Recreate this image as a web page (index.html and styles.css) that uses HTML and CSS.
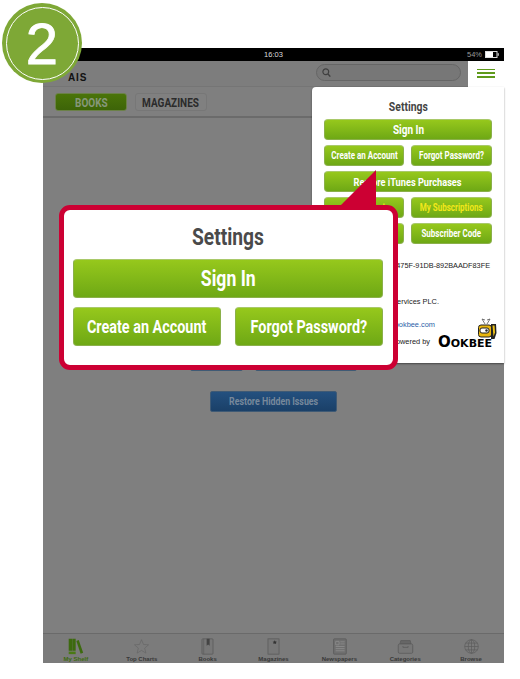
FILE: index.html
```html
<!DOCTYPE html>
<html lang="en">
<head>
<meta charset="utf-8">
<title>Settings</title>
<link rel="stylesheet" href="styles.css">
</head>
<body>
<div class="device">
  <div class="status">
    <span class="status-time">16:03</span>
    <span class="status-right">54%
      <svg class="battery" width="14" height="7" viewBox="0 0 14 7"><rect x=".5" y=".5" width="11.5" height="6" fill="none" stroke="#ddd"/><rect x="1" y="1" width="7" height="5" fill="#fff"/><rect x="12.6" y="2.2" width="1.2" height="2.6" fill="#ccc"/></svg>
    </span>
  </div>
  <header class="top">
    <span class="brand">AIS</span>
    <div class="search">
      <svg width="9" height="10" viewBox="0 0 9 10"><circle cx="3.8" cy="3.8" r="2.9" fill="none" stroke="#3f3f3f" stroke-width="1.2"/><path d="M6 6l2.3 2.6" stroke="#3f3f3f" stroke-width="1.4"/></svg>
    </div>
    <div class="menu"><i></i><i></i><i></i></div>
  </header>
  <div class="tabs">
    <span class="tab tab-on"><b class="c">BOOKS</b></span>
    <span class="tab"><b class="c">MAGAZINES</b></span>
  </div>
  <main class="shelf">
    <div class="shelf-row">
      <span class="blue blue-a"><b class="c">Hide</b></span>
      <span class="blue blue-b"><b class="c">Update Library</b></span>
    </div>
    <span class="blue blue-c"><b class="c">Restore Hidden Issues</b></span>
  </main>
  <nav class="bar">
    <div class="bar-item bar-on">
      <svg width="20" height="20" viewBox="0 0 20 20"><path d="M2 1h4.500v14H2zM6.800 1h3.400v14H6.800z" fill="#3d6a0f"/><path d="M2 16h8.200v3H2z" fill="#4a7a14"/><path d="M11 3.500l2.800-1.200 5.200 15-3 1.200z" fill="#3d6a0f"/></svg>
      My Shelf
    </div>
    <div class="bar-item">
      <svg width="20" height="20" viewBox="0 0 20 20"><path d="M10 2l2.300 5.600 6 .4-4.600 3.900 1.500 5.900L10 14.600l-5.200 3.200 1.500-5.900L1.700 8l6-.4z" fill="none" stroke="#666" stroke-width=".8"/></svg>
      Top Charts
    </div>
    <div class="bar-item">
      <svg width="20" height="20" viewBox="0 0 20 20"><rect x="3.500" y="1" width="13" height="18" rx="1" fill="#777" stroke="#5c5c5c"/><path d="M9 1h3.500v8L10.700 7.500 9 9z" fill="#444"/><path d="M5.500 1v18" stroke="#5c5c5c" stroke-width=".7"/></svg>
      Books
    </div>
    <div class="bar-item">
      <svg width="20" height="20" viewBox="0 0 20 20"><rect x="3.500" y="1" width="13" height="18" fill="#777" stroke="#5c5c5c"/><path d="M11.500 2.500l.8 1.600 1.700.2-1.200 1.200.3 1.700-1.600-.8-1.600.8.300-1.700L9 4.300l1.700-.2z" fill="#333"/></svg>
      Magazines
    </div>
    <div class="bar-item">
      <svg width="20" height="20" viewBox="0 0 20 20"><rect x="3" y="1" width="15" height="18" rx="1" fill="#6f6f6f" stroke="#5c5c5c"/><path d="M5.500 4h4v4h-4zM11 4.500h5M11 7h5M5.500 10h10.500M5.500 12.500h10.500M5.500 15h10.500" fill="none" stroke="#8c8c8c"/></svg>
      Newspapers
    </div>
    <div class="bar-item">
      <svg width="20" height="20" viewBox="0 0 20 20"><path d="M4.500 3h11l1 4h-13z" fill="#666" stroke="#5c5c5c"/><rect x="1.500" y="7" width="17" height="11" rx="1.500" fill="#777" stroke="#5c5c5c"/><path d="M7 9.500v1.500h6V9.500" fill="none" stroke="#5c5c5c"/></svg>
      Categories
    </div>
    <div class="bar-item">
      <svg width="20" height="20" viewBox="0 0 20 20"><g fill="none" stroke="#5c5c5c" stroke-width=".8"><circle cx="10" cy="10" r="8"/><ellipse cx="10" cy="10" rx="3.800" ry="8"/><path d="M10 2v16M2 10h16M3 6h14M3 14h14"/></g></svg>
      Browse
    </div>
  </nav>
</div>

<aside class="pop">
  <h2 class="pop-title"><b class="c">Settings</b></h2>
  <div class="pop-buttons">
    <span class="btn btn-sm btn-wide"><b class="c">Sign In</b></span>
    <div class="pair">
      <span class="btn btn-xs"><b class="c">Create an Account</b></span>
      <span class="btn btn-xs"><b class="c">Forgot Password?</b></span>
    </div>
    <span class="btn btn-md"><b class="c">Restore iTunes Purchases</b></span>
    <div class="pair">
      <span class="btn btn-xs btn-yellow"><b class="c">My Account</b></span>
      <span class="btn btn-xs btn-yellow"><b class="c">My Subscriptions</b></span>
    </div>
    <div class="pair">
      <span class="btn btn-xs"><b class="c">Redeem Code</b></span>
      <span class="btn btn-xs"><b class="c">Subscriber Code</b></span>
    </div>
  </div>
  <p class="info info-id">UDID: 475F-91DB-892BAADF83FE</p>
  <p class="info info-co">Services PLC.</p>
  <div class="foot">
    <div class="foot-text">
      <a class="foot-link">ookbee.com</a>
      <span>Powered by</span>
    </div>
    <div class="logo">
      <svg class="bee" width="19" height="23" viewBox="0 0 19 23"><path d="M7 6L4 1M9 6l3-5M4 1l3 1M12 1l-3 1" fill="none" stroke="#555" stroke-width=".8"/><rect x=".5" y="7" width="13" height="12" rx="2.500" fill="#e9b60f" stroke="#222"/><rect x="2" y="10" width="9" height="5" rx="2" fill="#fff" stroke="#222"/><circle cx="8.500" cy="12.500" r="1.200" fill="#222"/><path d="M13 6h5l.5 9-2 6h-3.500z" fill="#222"/><path d="M14.500 7.500h2l.5 7-1.500 4z" fill="#f0c419"/></svg>
      <span class="logo-text">Ookbee</span>
    </div>
  </div>
</aside>

<aside class="callout">
  <svg class="callout-tip" width="36" height="36" viewBox="0 0 36 36"><path d="M0 36L36 0v36z" fill="#cc0033"/></svg>
  <h2 class="callout-title"><b class="c">Settings</b></h2>
  <span class="btn btn-lg"><b class="c">Sign In</b></span>
  <div class="callout-pair">
    <span class="btn btn-lg2"><b class="c">Create an Account</b></span>
    <span class="btn btn-lg2"><b class="c">Forgot Password?</b></span>
  </div>
</aside>

<div class="badge"><span>2</span></div>
</body>
</html>
```
FILE: styles.css
```css
* { box-sizing: border-box; }
html, body { margin: 0; padding: 0; background: #fff; }
body { position: relative; width: 520px; height: 679px; overflow: hidden; font-family: "Liberation Sans", Arial, sans-serif; }

.c { display: inline-block; font-family: Roboto, "Liberation Sans", sans-serif; font-weight: 700; transform: scaleX(.8); white-space: nowrap; }

.device { width: 461px; height: 615px; margin: 48px 0 0 43px; background: #7f7f7f; display: flex; flex-direction: column; }

.status { height: 13px; flex: none; background: #000; color: #ddd; font-size: 7.500px; display: flex; align-items: center; justify-content: center; position: relative; }
.status-right { position: absolute; right: 5px; top: 2px; display: flex; align-items: center; gap: 3px; color: #999; }

.top { height: 26px; flex: none; display: flex; align-items: center; border-bottom: 1px solid #757575; background: #7d7d7d; }
.brand { margin-left: 25px; font-size: 10px; font-weight: 700; letter-spacing: .9px; color: #111; margin-top: 8px; }
.search { margin-left: 229px; width: 145px; height: 17px; border-radius: 9px; background: #777; border: 1px solid #666; display: flex; align-items: center; padding-left: 5px; margin-top: -2px; }
.menu { width: 36px; height: 26px; margin-left: 7px; background: #fff; display: flex; flex-direction: column; gap: 2.400px; padding: 8px 9px 0 9px; }
.menu i { display: block; height: 1.600px; background: #5f9a1b; }

.tabs { flex: none; display: flex; gap: 8px; padding: 6px 12px 5px; border-bottom: 2px solid #6b6b6b; height: 31px; }
.tab { width: 72px; height: 18px; border-radius: 3px; background: #808080; border: 1px solid #777; color: #2b2b2b; font-size: 12.500px; display: flex; align-items: center; justify-content: center; }
.tab-on { background: linear-gradient(#4a7409, #3d6408); border-color: #6b8148; color: #86977a; }

.shelf { flex: 1; display: flex; flex-direction: column; align-items: center; padding-top: 232px; }
.shelf-row { display: flex; gap: 12px; height: 26px; width: 167px; }
.blue { height: 21px; border-radius: 2px; background: linear-gradient(#24507f, #1a4068); border: 1px solid #3f5a75; color: #77889b; font-size: 11px; display: flex; align-items: center; justify-content: center; }
.blue-a { width: 53px; }
.blue-b { width: 102px; }
.blue-c { width: 127px; margin-top: 15px; }

.bar { flex: none; height: 30px; border-top: 1px solid #6a6a6a; display: grid; grid-template-columns: repeat(7, 1fr); background: #7b7b7b; }
.bar-item { display: flex; flex-direction: column; align-items: center; font-size: 6px; font-weight: 700; color: #383838; line-height: 7px; padding-top: 4px; white-space: nowrap; }
.bar-item svg { width: 17px; height: 17px; flex: none; margin-bottom: 1px; }
.bar-on { color: #3d6a0f; }

.btn { display: flex; align-items: center; justify-content: center; color: #fff; border-radius: 4px; border: 1px solid #8bb04a; border-top-color: #a9c96a; background: linear-gradient(#96c81c, #6ea815); white-space: nowrap; }

.pop { position: absolute; left: 312px; top: 87px; width: 192px; height: 276px; background: #fff; border-radius: 4px 0 0 4px; box-shadow: 0 1px 2px rgba(0,0,0,.45); padding: 0 12px; }
.pop-title { margin: 12px 0 0; font-size: 13px; line-height: 15px; font-weight: 700; color: #444; text-align: center; }
.pop-buttons { display: flex; flex-direction: column; gap: 5px; margin-top: 5px; }
.btn-sm { height: 21px; font-size: 12.500px; }
.btn-md { height: 21px; font-size: 11.500px; }
.btn-xs { height: 21px; font-size: 10px; }
.pair { display: grid; grid-template-columns: 80px 81px; gap: 7px; }
.btn-yellow { color: #f2e81a; }

.info { margin: 0; color: #222; text-align: right; line-height: 9px; white-space: nowrap; }
.info-id { margin-top: 17px; margin-right: 2px; font-size: 7.300px; }
.info-co { margin-top: 27px; margin-right: 53px; font-size: 7.400px; }
.foot { display: flex; justify-content: flex-end; gap: 8px; margin-top: 5px; margin-right: -5px; }
.foot-text { display: flex; flex-direction: column; align-items: flex-end; gap: 8px; font-size: 7.400px; line-height: 9px; color: #222; padding-top: 9px; }
.foot-link { color: #2a5fa8; margin-right: -5px; }
.logo { width: 59px; height: 38px; display: flex; flex-direction: column; align-items: flex-end; padding-top: 7px; }
.bee { flex: none; margin: 0 0 -4px; }
.logo-text { font: 700 15px/11px "DejaVu Sans", sans-serif; font-variant: small-caps; color: #000; align-self: flex-start; }

.callout { position: absolute; left: 59px; top: 205px; width: 339px; height: 165px; background: #fff; border: 5px solid #cc0033; border-radius: 11px; padding: 0 10px 0 9px; display: flex; flex-direction: column; }
.callout-tip { position: absolute; left: 276px; top: -40px; }
.callout-title { margin: 14px 0 0; font-size: 24px; line-height: 26px; font-weight: 700; color: #4a4a4a; text-align: center; }
.btn-lg { height: 39px; margin-top: 9px; font-size: 22px; }
.callout-pair { display: grid; grid-template-columns: 148px 148px; gap: 14px; margin-top: 9px; }
.btn-lg2 { height: 39px; font-size: 18px; }

.badge { position: absolute; left: 2px; top: 3px; width: 80px; height: 80px; border-radius: 50%; background: #7ea836; display: flex; align-items: center; justify-content: center; padding-top: 2px; }
.badge::before { content: ""; position: absolute; inset: 3.500px; border: 1.500px solid #fff; border-radius: 50%; }
.badge span { color: #fff; font-size: 58px; line-height: 1; -webkit-text-stroke: .8px #fff; }
```
